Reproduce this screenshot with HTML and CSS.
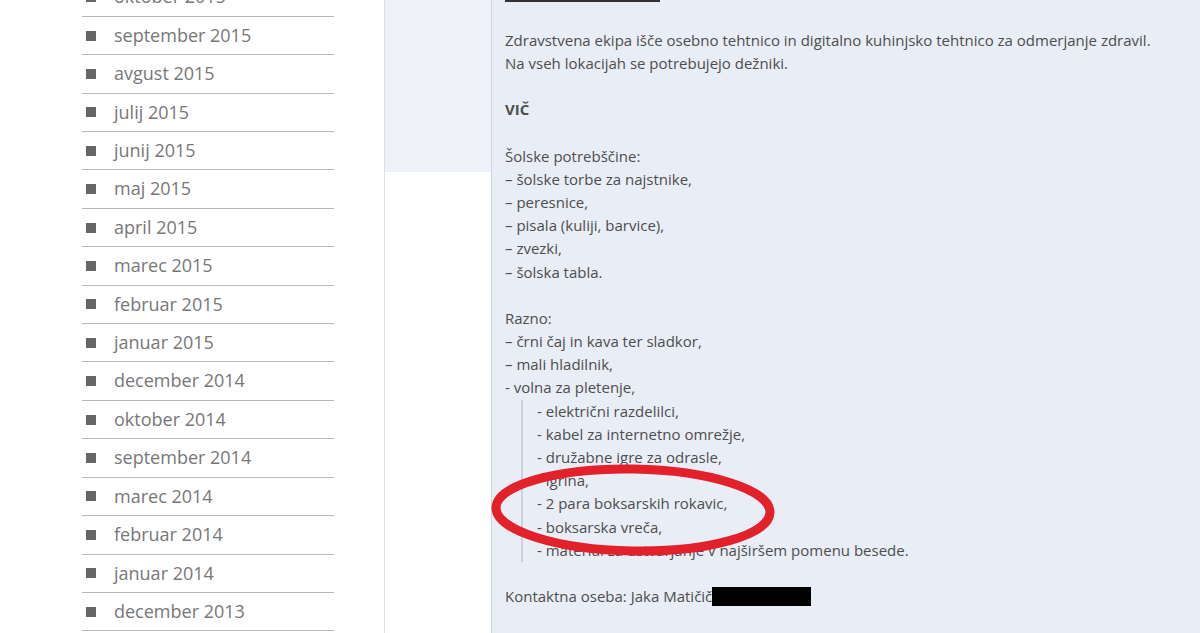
FILE: index.html
```html
<!DOCTYPE html>
<html lang="sl">
<head>
    <meta charset="UTF-8">
    <title>Arhiv - potrebščine</title>
    <link rel="stylesheet" href="styles.css">
</head>
<body>
    <div class="sidebar">
        <ul class="archive">
            <li>oktober 2015</li>
            <li>september 2015</li>
            <li>avgust 2015</li>
            <li>julij 2015</li>
            <li>junij 2015</li>
            <li>maj 2015</li>
            <li>april 2015</li>
            <li>marec 2015</li>
            <li>februar 2015</li>
            <li>januar 2015</li>
            <li>december 2014</li>
            <li>oktober 2014</li>
            <li>september 2014</li>
            <li>marec 2014</li>
            <li>februar 2014</li>
            <li>januar 2014</li>
            <li>december 2013</li>
        </ul>
    </div>
    <div class="gutter">
        <div class="gutter-top"></div>
    </div>
    <div class="content">
        <div class="top-rule"></div>
        <p>Zdravstvena ekipa išče osebno tehtnico in digitalno kuhinjsko tehtnico za odmerjanje zdravil.<br>
        Na vseh lokacijah se potrebujejo dežniki.</p>
        <p class="place">VIČ</p>
        <p>Šolske potrebščine:<br>
        – šolske torbe za najstnike,<br>
        – peresnice,<br>
        – pisala (kuliji, barvice),<br>
        – zvezki,<br>
        – šolska tabla.</p>
        <div class="block">
            <p class="tight">Razno:<br>
            – črni čaj in kava ter sladkor,<br>
            – mali hladilnik,<br>
            - volna za pletenje,</p>
            <blockquote>
                - električni razdelilci,<br>
                - kabel za internetno omrežje,<br>
                - družabne igre za odrasle,<br>
                - igrina,<br>
                - 2 para boksarskih rokavic,<br>
                - boksarska vreča,<br>
                - material za ustvarjanje v najširšem pomenu besede.
            </blockquote>
        </div>
        <p>Kontaktna oseba: Jaka Matičič<span class="redacted"></span></p>

        <!-- red marker circle drawn over the text -->
        <svg class="marker" width="320" height="120" viewBox="0 0 320 120">
            <ellipse cx="151" cy="60" rx="137" ry="41" transform="rotate(1 151 60)"
                fill="none" stroke="#e2212b" stroke-width="9"/>
        </svg>
    </div>
</body>
</html>
```

FILE: styles.css
```css
body {
    margin: 0;
    display: flex;
    height: 633px;
    overflow: hidden;
    background-color: #fff;
    font-family: 'Open Sans', 'Liberation Sans', sans-serif;
}
.sidebar {
    width: 384px;
    border-right: 1px solid #dcdfe3;
    flex-shrink: 0;
}
.archive {
    list-style: none;
    margin: -21.6px 0 0 82px;
    padding: 0;
    width: 252px;
}
.archive li {
    font-size: 18px;
    line-height: 21.4px;
    padding: 8px 0;
    color: #777;
    border-bottom: 1px solid #b8b8b8;
    display: flex;
    align-items: center;
}
.archive li::before {
    content: '';
    width: 10px;
    height: 10px;
    background-color: #666;
    margin: 0 18px 0 4px;
}
.gutter {
    width: 106px;
    border-right: 1px solid #cfd6df;
    flex-shrink: 0;
}
.gutter-top {
    height: 172px;
    background-color: #eef2f8;
}
.content {
    position: relative;
    flex: 1;
    background-color: #e9eef6;
    padding: 0 13px;
    font-size: 15px;
    line-height: 23.2px;
    color: #4d4d4d;
}
.top-rule {
    width: 155px;
    height: 2px;
    background-color: #333;
}
.content p {
    margin: 27px 0 0;
}
.content p + p,
.content .block,
.content .block + p {
    margin-top: 23px;
}
.content .tight {
    margin: 0;
}
.place {
    font-weight: bold;
}
blockquote {
    margin: 0 0 0 16px;
    padding-left: 14px;
    border-left: 2px solid #c8d3df;
}
.redacted {
    display: inline-block;
    width: 99px;
    height: 19px;
    background-color: #000;
    vertical-align: -4px;
}
.marker {
    position: absolute;
    left: -10px;
    top: 450px;
}
```
